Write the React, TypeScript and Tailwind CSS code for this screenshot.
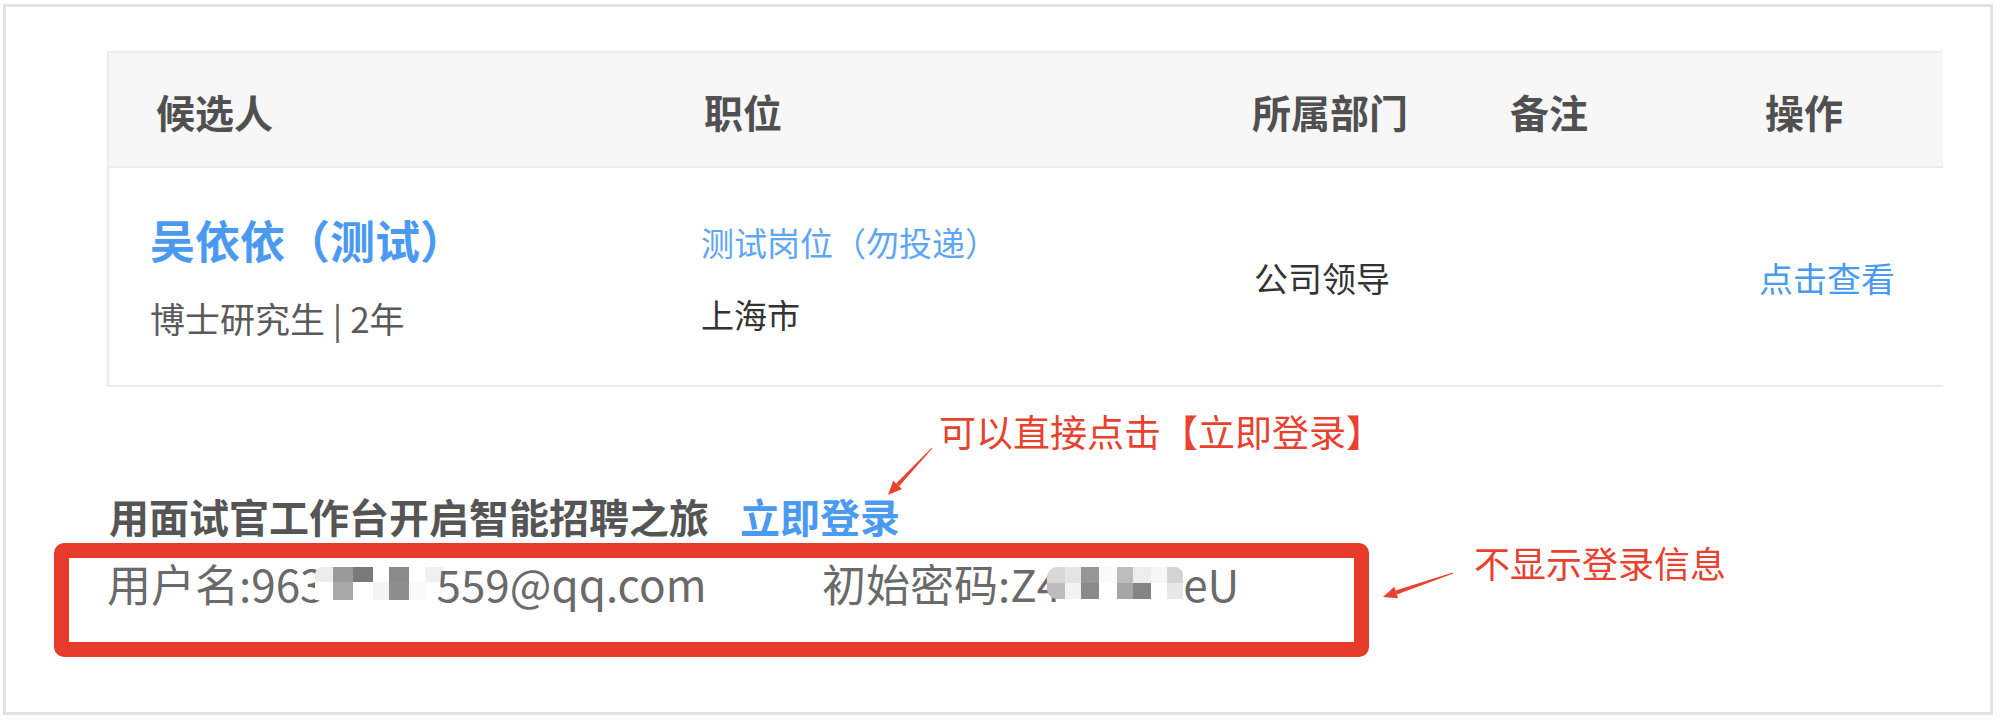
import React from "react";

const FONT = { fontFamily: '"Noto Sans CJK SC", "Noto Sans", sans-serif' };

function MosaicUser() {
  return (
    <span className="inline-flex flex-col align-middle -ml-[10px] -mr-[6px]">
      <span className="flex h-[15px]">
        <span className="w-[18px] bg-[#ececec] rounded-tl-[8px]" />
        <span className="w-[20px] bg-[#9a9a9a]" />
        <span className="w-[20px] bg-[#7a7a7a]" />
        <span className="w-[16px] bg-[#ffffff]" />
        <span className="w-[20px] bg-[#8a8a8a]" />
        <span className="w-[16px] bg-[#ffffff]" />
        <span className="w-[18px] bg-[#f0f0f0]" />
      </span>
      <span className="flex h-[18px]">
        <span className="w-[18px] bg-[#ffffff]" />
        <span className="w-[20px] bg-[#a8a8a8]" />
        <span className="w-[20px] bg-[#ffffff]" />
        <span className="w-[16px] bg-[#f4f4f4]" />
        <span className="w-[20px] bg-[#8e8e8e]" />
        <span className="w-[16px] bg-[#fafafa]" />
        <span className="w-[18px] bg-[#ffffff]" />
      </span>
    </span>
  );
}

function MosaicPass() {
  return (
    <span className="inline-flex flex-col align-middle -ml-[14px]">
      <span className="flex h-[16px]">
        <span className="w-[18px] bg-[#d8d8d8] rounded-tl-[10px]" />
        <span className="w-[16px] bg-[#e4e4e4]" />
        <span className="w-[18px] bg-[#969696]" />
        <span className="w-[18px] bg-[#fafafa]" />
        <span className="w-[16px] bg-[#bdbdbd]" />
        <span className="w-[18px] bg-[#ededed]" />
        <span className="w-[16px] bg-[#f6f6f6]" />
        <span className="w-[16px] bg-[#d4d4d4] rounded-tr-[8px]" />
      </span>
      <span className="flex h-[16px]">
        <span className="w-[18px] bg-[#bcbcbc] rounded-bl-[10px]" />
        <span className="w-[16px] bg-[#f2f2f2]" />
        <span className="w-[18px] bg-[#8a8a8a]" />
        <span className="w-[18px] bg-[#ffffff]" />
        <span className="w-[16px] bg-[#a6a6a6]" />
        <span className="w-[18px] bg-[#848484]" />
        <span className="w-[16px] bg-[#ffffff]" />
        <span className="w-[16px] bg-[#e8e8e8]" />
      </span>
    </span>
  );
}

export default function App() {
  return (
    <div className="relative w-[2002px] h-[720px] bg-white overflow-hidden" style={FONT}>
      <div className="ml-[3px] mt-[4px] w-[1990px] h-[711px] border-[3px] border-[#e2e2e2] pl-[101px] pt-[44px]">
        {/* table */}
        <div className="w-[1836px] border-l-2 border-t-2 border-b-2 border-[#ebebeb]">
          <div className="grid grid-cols-[551px_551px_258px_249px_1fr] pl-[41px] h-[115px] pt-[4px] items-center bg-[#f7f7f7] border-b-2 border-[#ebebeb] text-[39px] font-bold text-[#505050] leading-none">
            <div className="pl-[6px]">候选人</div>
            <div className="pl-[3px]">职位</div>
            <div>所属部门</div>
            <div>备注</div>
            <div className="pl-[6px]">操作</div>
          </div>
          <div className="grid grid-cols-[551px_551px_258px_249px_1fr] pl-[41px] h-[217px] items-center">
            <div className="flex flex-col">
              <div className="text-[45px] leading-[50px] font-bold text-[#4a9af2] whitespace-nowrap">吴依依（测试）</div>
              <div className="mt-[33px] text-[35px] leading-[40px] text-[#5a5a5a]">博士研究生 | 2年</div>
            </div>
            <div className="flex flex-col pt-[3px]">
              <div className="text-[33px] leading-[40px] text-[#5ea6f3] whitespace-nowrap">测试岗位（勿投递）</div>
              <div className="mt-[32px] text-[33px] leading-[40px] text-[#333333]">上海市</div>
            </div>
            <div className="pl-[2px] pt-[2px] text-[34px] leading-[40px] text-[#333333]">公司领导</div>
            <div />
            <div className="pt-[2px] text-[34px] leading-[40px] text-[#4a9af2]">点击查看</div>
          </div>
        </div>

        {/* login line */}
        <div className="mt-[104px] flex items-center h-[50px] text-[40px] font-bold leading-[50px] whitespace-nowrap">
          <span className="pl-[2px] text-[#555555]">用面试官工作台开启智能招聘之旅</span>
          <span className="ml-[31px] text-[#4a9af2]">立即登录</span>
        </div>
        <div className="mt-[17px] flex items-center h-[50px] text-[44px] leading-[50px] text-[#6a6a6a]">
          <span className="w-[715px] flex items-center whitespace-nowrap">
            用户名:963
            <MosaicUser />
            559@qq.com
          </span>
          <span className="flex items-center whitespace-nowrap">
            初始密码:Z4
            <MosaicPass />
            eU
          </span>
        </div>
      </div>

      {/* annotations */}
      <div className="absolute left-[54px] top-[543px] w-[1315px] h-[114px] border-[15px] border-[#e63a2a] rounded-[10px]" />
      <div className="absolute left-[939px] top-[413px] text-[37px] leading-none text-[#e8412e] whitespace-nowrap">
        可以直接点击【立即登录】
      </div>
      <div className="absolute left-[1474px] top-[544px] text-[36px] leading-none text-[#e8412e] whitespace-nowrap">
        不显示登录信息
      </div>
      <svg className="absolute left-[870px] top-[440px]" width="80" height="70" viewBox="0 0 80 70">
        <polygon points="62.4,8.3 61.6,7.7 26.1,43.4 29.1,46.2" fill="#e8412e" />
        <polygon points="18,55 32,48.9 23.2,40.7" fill="#e8412e" />
      </svg>
      <svg className="absolute left-[1370px] top-[560px]" width="100" height="50" viewBox="0 0 100 50">
        <polygon points="83.2,13.5 82.8,12.5 25.6,30.6 26.8,34.4" fill="#e8412e" />
        <polygon points="13,37 28.1,38.2 24.3,26.8" fill="#e8412e" />
      </svg>
    </div>
  );
}
